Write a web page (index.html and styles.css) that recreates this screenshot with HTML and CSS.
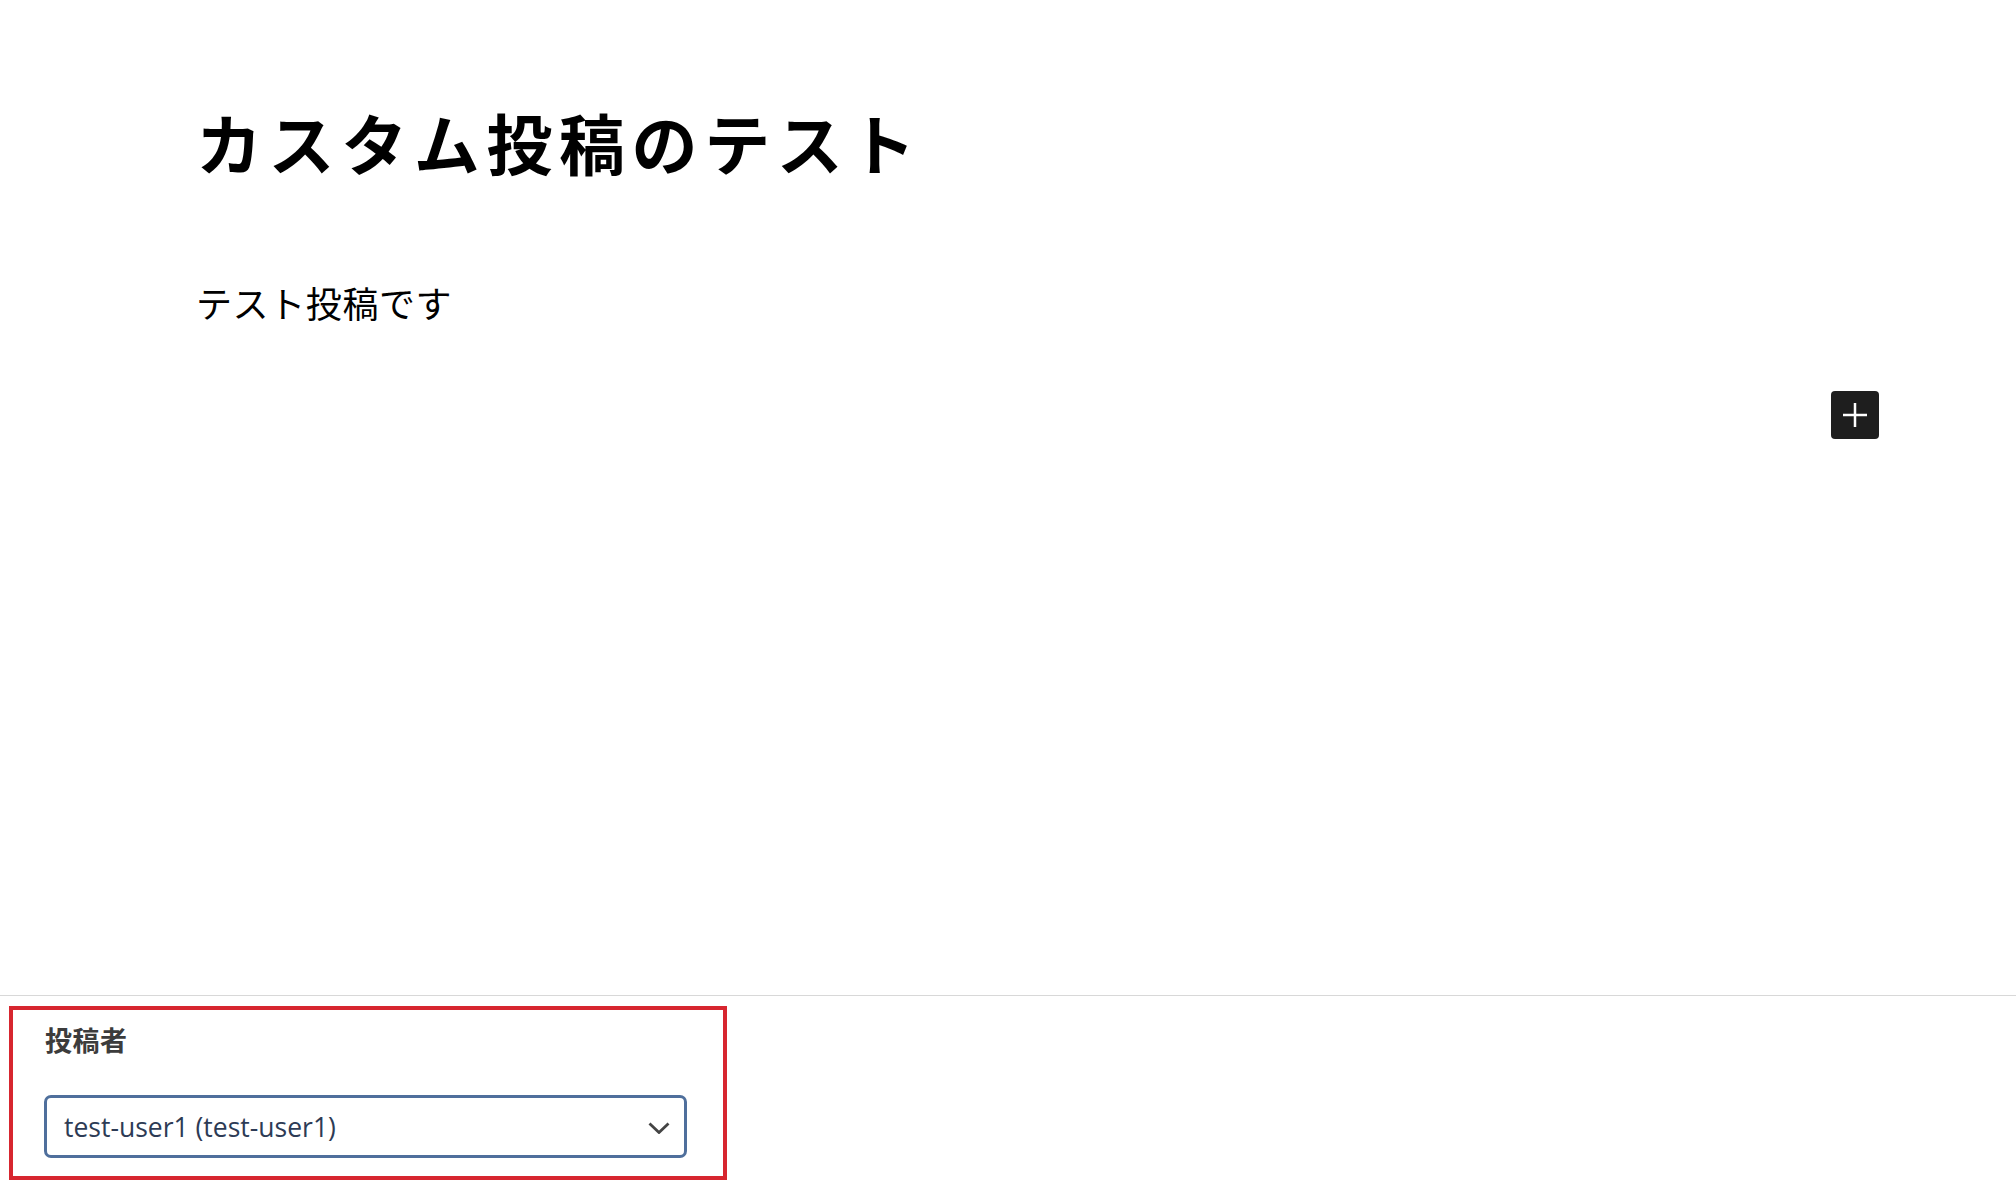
FILE: index.html
```html
<!DOCTYPE html>
<html lang="ja">
<head>
<meta charset="utf-8">
<title>カスタム投稿のテスト</title>
<link rel="stylesheet" href="styles.css">
</head>
<body>
<div class="editor">
  <h1 class="post-title">カスタム投稿のテスト</h1>
  <p class="post-text">テスト投稿です</p>
  <div class="appender-row">
    <button class="appender" aria-label="ブロックを追加">
      <svg width="24" height="24" viewBox="0 0 24 24"><path d="M12 0v24M0 12h24" stroke="#fff" stroke-width="2.5" fill="none"/></svg>
    </button>
  </div>
</div>
<div class="metabox-area">
  <div class="metabox">
    <div class="metabox-label">投稿者</div>
    <div class="select">
      <span class="select-value">test-user1 (test-user1)</span>
      <svg class="chevron" width="22" height="12" viewBox="0 0 22 12"><path d="M1.5 1.5 11 10.5 20.5 1.5" stroke="#444" stroke-width="2.8" fill="none"/></svg>
    </div>
  </div>
</div>
</body>
</html>
```
FILE: styles.css
```css
html, body {
  margin: 0;
  padding: 0;
  background: #fff;
}
body {
  font-family: "Noto Sans CJK JP", "Noto Sans", sans-serif;
  color: #000;
}
.editor {
  height: 996px;
  box-sizing: border-box;
  border-bottom: 1px solid #d8d8d8;
  padding: 101px 137px 0 196px;
}
.post-title {
  margin: 0;
  font-size: 66px;
  line-height: 80px;
  font-weight: 700;
  letter-spacing: 6.6px;
}
.post-text {
  margin: 96px 0 0;
  font-size: 36px;
  line-height: 50px;
  font-weight: 400;
  letter-spacing: 0.6px;
}
.appender-row {
  display: flex;
  justify-content: flex-end;
  margin-top: 64px;
}
.appender {
  width: 48px;
  height: 48px;
  border: 0;
  border-radius: 4px;
  background: #1e1e1e;
  padding: 0;
  display: flex;
  align-items: center;
  justify-content: center;
}
.metabox-area {
  padding: 10px 0 0 9px;
}
.metabox {
  width: 718px;
  height: 174px;
  box-sizing: border-box;
  border: 4px solid #d7262f;
  padding: 11px 0 0 31px;
}
.metabox-label {
  font-size: 27px;
  line-height: 38px;
  font-weight: 700;
  color: #3c3c3c;
  padding-left: 1px;
  letter-spacing: 0.5px;
}
.select {
  margin-top: 36px;
  width: 643px;
  height: 63px;
  box-sizing: border-box;
  border: 3px solid #4f6f9c;
  border-radius: 7px;
  display: flex;
  align-items: center;
  justify-content: space-between;
  padding: 0 14px 0 17px;
}
.select-value {
  font-family: "Open Sans", "Noto Sans", sans-serif;
  font-size: 26.5px;
  color: #2d3b55;
}
.chevron {
  display: block;
  margin-top: 2px;
}
```
